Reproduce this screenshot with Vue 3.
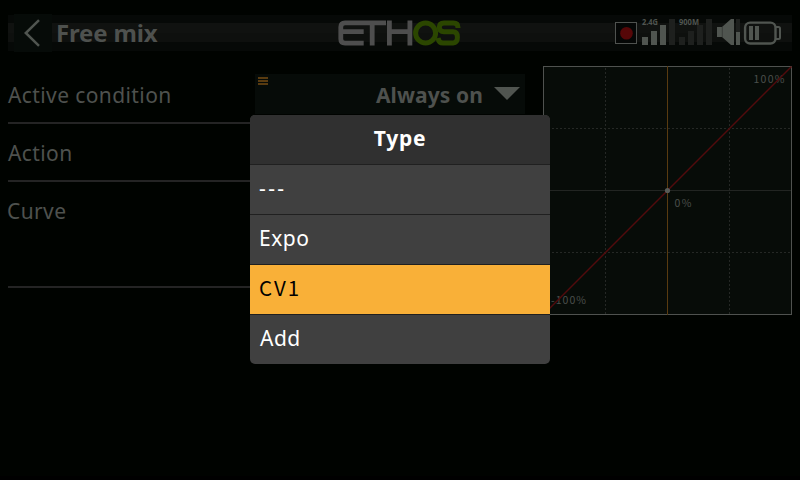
<script setup>
const rows = [
  { label: 'Active condition', value: 'Always on' },
  { label: 'Action' },
  { label: 'Curve', tall: true },
]
const options = ['---', 'Expo', 'CV1', 'Add']
const selected = 'CV1'
</script>

<template>
  <main class="screen">
    <header class="topbar">
      <button class="back" aria-label="Back">
        <svg width="38" height="38" viewBox="0 0 38 38"><path d="M25 6.2 11.8 19 25 31.8" /></svg>
      </button>
      <h1>Free mix</h1>
      <svg class="logo" width="124" height="26" viewBox="338 20.5 124 26" role="img" aria-label="ETHOS">
        <g fill="none" stroke="#4e4e4e" stroke-width="4.8">
          <path d="M386 23.4H345Q340.8 23.4 340.8 27.6V39.5Q340.8 43.6 345 43.6H363.7M341 32.2H363.7M372.2 23.4V46M389.4 21V46M409.9 21V46M389 32.2H410" />
        </g>
        <g fill="none" stroke="#2b4600" stroke-width="5">
          <circle cx="425.6" cy="33.5" r="10" />
          <path d="M458 28.5V28Q458 23.4 453.5 23.4H444Q439.3 23.4 439.3 27.8T444 32.3H453Q457.4 32.3 457.4 37.7T453 43.5H443Q438.8 43.5 438 38.5" />
        </g>
      </svg>
      <svg class="status" width="168" height="32" viewBox="614 18 168 32">
        <rect x="615.5" y="23.5" width="21" height="21" fill="#050706" stroke="#4f524f" />
        <circle cx="626.5" cy="34.3" r="6.3" fill="#560708" />
        <path d="M669 20h6v26h-6zM679 38h6v8h-6zM688 32h6v14h-6zM697 26h6v20h-6zM706 20h6v26h-6zM736 20h4v13h-4z" fill="#1e201e" />
        <g fill="#505550">
          <path d="M642 38h6v8h-6zM651 32h6v14h-6zM660 26h6v20h-6z" />
          <path d="M717 28h5l9-8h3v26h-3l-9-8h-5zM736 33h4v13h-4zM749 27h4v14h-4zM755 27h4v14h-4z" />
        </g>
        <path d="M722.3 28v10" stroke="#303330" stroke-width=".7" />
        <text x="642" y="26" textLength="16" lengthAdjust="spacingAndGlyphs">2.4G</text>
        <text x="679" y="26" textLength="20" lengthAdjust="spacingAndGlyphs">900M</text>
        <rect x="745.1" y="23.6" width="30.4" height="20.9" rx="5" fill="none" stroke="#505550" stroke-width="2.4" />
        <path d="M776 28h2.5q1.5 0 1.5 1.5v9q0 1.5-1.5 1.5H776" fill="none" stroke="#505550" stroke-width="2" />
      </svg>
    </header>

    <div class="content">
      <section class="form">
        <div v-for="row in rows" :key="row.label" class="row" :class="{ tall: row.tall }">
          <span class="label">{{ row.label }}</span>
          <div v-if="row.value" class="select">
            <i class="menu"></i>
            <span>{{ row.value }}</span>
            <svg width="26" height="13" viewBox="0 0 26 13"><path d="M0 0h26L13 13z" fill="#505550" /></svg>
          </div>
        </div>
      </section>

      <svg class="chart" width="249" height="249" viewBox="0 0 249 249">
        <rect x=".5" y=".5" width="248" height="248" fill="#070c08" stroke="#4f524f" />
        <path d="M62.5 2V248M186.5 2V248M1 62.5H248M1 186.5H248" stroke="#252825" stroke-dasharray="2 2" />
        <path d="M1 124.5H248" stroke="#222522" />
        <text x="210.5" y="17" textLength="31">100%</text>
        <text x="131.5" y="141" textLength="17">0%</text>
        <text x="8" y="238" textLength="35">-100%</text>
        <path d="M.5 248.5 248.5.5" stroke="#520a0c" stroke-width="1.4" />
        <path d="M124.5 0V249" stroke="#593b10" />
        <circle cx="124.5" cy="124.5" r="2.6" fill="#575b57" />
      </svg>
    </div>

    <div class="modal" role="dialog">
      <h2>Type</h2>
      <ul>
        <li
          v-for="option in options"
          :key="option"
          :class="{ active: option === selected, none: option === '---', curve: option.startsWith('CV') }"
        >{{ option }}</li>
      </ul>
    </div>
  </main>
</template>

<style>
body { margin: 0; background: #000300; }
</style>

<style scoped>
.screen {
  position: relative;
  box-sizing: border-box;
  width: 800px;
  height: 480px;
  overflow: hidden;
  padding: 14px 8px 0;
  background: linear-gradient(#000300 476px, #000 476px);
  color: #4e514e;
  font: 21px/28px "Noto Sans", sans-serif;
}
.topbar {
  display: flex;
  align-items: center;
  height: 38px;
  padding-left: 6px;
  background: linear-gradient(#000300 1px, #060907 1px 9px, #101210 9px 19px, #0e100e 19px 28px, #060907 28px 37px, #000300 37px);
}
.back {
  width: 38px;
  height: 38px;
  padding: 0;
  border: 0;
  background: #060b08;
}
.back svg { display: block; fill: none; stroke: #505550; stroke-width: 2.5; }
h1 {
  width: 282px;
  margin: 0 0 0 4px;
  font: 700 24px/36px "Noto Sans", sans-serif;
  letter-spacing: -.15px;
}
.logo { flex: none; }
.status { flex: none; margin-left: auto; margin-right: 10px; }
.status text { fill: #505550; font: 700 8px "Noto Sans", sans-serif; }
.content { display: flex; justify-content: space-between; padding: 14px 0 0; }
.form { width: 517px; }
.row {
  display: flex;
  align-items: center;
  justify-content: space-between;
  box-sizing: border-box;
  height: 58px;
  border-bottom: 2px solid #242424;
}
.row.tall { height: 106px; align-items: flex-start; padding-top: 15px; }
.label { padding-top: 1px; letter-spacing: .4px; }
.tall .label { padding-top: 0; margin-left: -1px; }
.select {
  display: flex;
  align-items: center;
  box-sizing: border-box;
  width: 270px;
  height: 40px;
  padding: 2px 5px 0 3px;
  background: #060b08;
  font-weight: 700;
  letter-spacing: .1px;
}
.select span { margin-left: auto; }
.select svg { margin: -4px 0 0 11px; }
.menu {
  align-self: flex-start;
  width: 10px;
  height: 8px;
  margin-top: 1px;
  background: repeating-linear-gradient(#593b10 0 2px, transparent 2px 3px);
}
.chart { flex: none; }
.chart text { fill: #4b4f4b; font: 10.5px "Noto Sans CJK SC", sans-serif; }
.modal {
  position: absolute;
  left: 250px;
  top: 115px;
  width: 300px;
  border-radius: 5px;
  overflow: hidden;
  background: #404040;
  color: #fff;
}
h2 {
  margin: 0;
  height: 49px;
  background: #303030;
  text-align: center;
  font-size: 21px;
  line-height: 46px;
  letter-spacing: .7px;
}
ul { margin: 0; padding: 0; list-style: none; }
li {
  box-sizing: border-box;
  height: 50px;
  border-top: 1px solid #202020;
  padding-left: 9px;
  line-height: 46px;
  letter-spacing: .5px;
}
li:last-child { padding-left: 10px; }
li.none { letter-spacing: 2.4px; }
li.curve { font-family: "Noto Sans CJK SC", "Noto Sans", sans-serif; font-size: 20.5px; line-height: 44px; letter-spacing: 2px; }
li.active { background: #f9b038; color: #000; }
</style>
